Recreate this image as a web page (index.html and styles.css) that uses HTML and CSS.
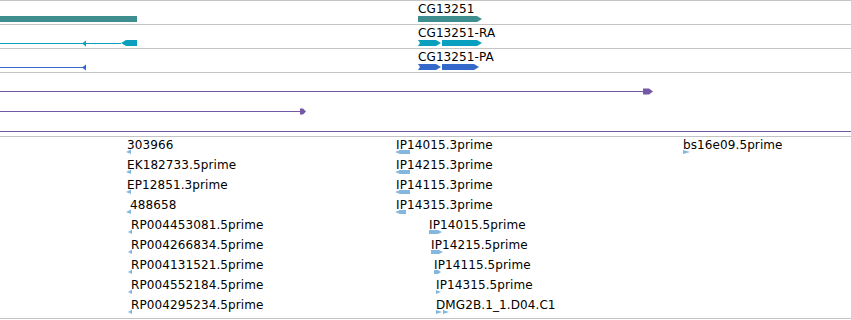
FILE: index.html
```html
<!DOCTYPE html>
<html lang="en">
<head>
    <meta charset="UTF-8">
    <title>Tracks</title>
    <link rel="stylesheet" href="styles.css">
</head>
<body>
    <div class="tracks">

        <!-- Gene -->
        <div class="track">
            <svg class="glyphs" width="851" height="23">
                <rect class="gene" x="0" y="15" width="137" height="6"/>
                <polygon class="gene" points="418,15 477,15 482,18 477,21 418,21"/>
            </svg>
            <span class="label" style="left:418px">CG13251</span>
        </div>

        <!-- Transcript -->
        <div class="track">
            <svg class="glyphs" width="851" height="23">
                <rect class="rna" x="0" y="18" width="121" height="1"/>
                <polygon class="rna" points="82,18.5 86,15.5 86,21.5"/>
                <polygon class="rna" points="121,18 126,15 137,15 137,21 126,21"/>
                <polygon class="rna" points="418,15 436,15 441,18 436,21 418,21 420,18"/>
                <polygon class="rna" points="442,15 477,15 482,18 477,21 442,21"/>
            </svg>
            <span class="label" style="left:418px">CG13251-RA</span>
        </div>

        <!-- Protein -->
        <div class="track">
            <svg class="glyphs" width="851" height="23">
                <rect class="prot" x="0" y="18" width="84" height="1"/>
                <polygon class="prot" points="82,18.5 86,15.5 86,21.5"/>
                <polygon class="prot" points="418,15 436,15 441,18 436,21 418,21 420,18"/>
                <polygon class="prot" points="442,15 474,15 479,18 474,21 442,21"/>
            </svg>
            <span class="label" style="left:418px">CG13251-PA</span>
        </div>

        <!-- Long features -->
        <div class="track track-long">
            <svg class="glyphs" width="851" height="63">
                <rect class="long" x="0" y="18" width="645" height="1"/>
                <polygon class="long" points="643,15.5 649,15.5 653,18.5 649,21.5 643,21.5"/>
                <rect class="long" x="0" y="38" width="302" height="1"/>
                <polygon class="long" points="300,35.5 303,35.5 306,38.5 303,41.5 300,41.5"/>
                <rect class="long" x="0" y="58" width="851" height="1"/>
            </svg>
        </div>

        <!-- Reads -->
        <div class="track track-reads">
            <svg class="glyphs" width="851" height="181">
                <g class="read">
                    <polygon points="126,15 131,12.5 131,17"/>
                    <polygon points="126,35 131,32.5 131,37"/>
                    <polygon points="126,55 131,52.5 131,57"/>
                    <polygon points="126,75 131,72.5 131,77"/>
                    <polygon points="128,95 132,92.5 132,97"/>
                    <polygon points="128,115 132,112.5 132,117"/>
                    <polygon points="128,135 132,132.5 132,137"/>
                    <polygon points="128,155 132,152.5 132,157"/>
                    <polygon points="128,175 132,172.5 132,177"/>

                    <polygon points="395,15 400,13 410,13 410,17 400,17"/>
                    <polygon points="395,35 400,33 410,33 410,37 400,37"/>
                    <polygon points="395,55 400,53 410,53 410,57 400,57"/>
                    <polygon points="395,75 400,73 406,73 406,77 400,77"/>
                    <polygon points="429,93 438,93 442,95 438,97 429,97"/>
                    <polygon points="431,113 439,113 443,115 439,117 431,117"/>
                    <polygon points="434,133 438,133 441,135 438,137 434,137"/>
                    <polygon points="436,153 441,155 436,157"/>
                    <polygon points="436,173 442,175 436,177"/>
                    <polygon points="443,173 449,175 443,177"/>

                    <polygon points="683,13 690,15 683,17"/>
                </g>
            </svg>
            <span class="label" style="left:127px;top:1px">303966</span>
            <span class="label" style="left:127px;top:21px">EK182733.5prime</span>
            <span class="label" style="left:127px;top:41px">EP12851.3prime</span>
            <span class="label" style="left:130px;top:61px">488658</span>
            <span class="label" style="left:131px;top:81px">RP004453081.5prime</span>
            <span class="label" style="left:131px;top:101px">RP004266834.5prime</span>
            <span class="label" style="left:131px;top:121px">RP004131521.5prime</span>
            <span class="label" style="left:131px;top:141px">RP004552184.5prime</span>
            <span class="label" style="left:131px;top:161px">RP004295234.5prime</span>

            <span class="label" style="left:396px;top:1px">IP14015.3prime</span>
            <span class="label" style="left:396px;top:21px">IP14215.3prime</span>
            <span class="label" style="left:396px;top:41px">IP14115.3prime</span>
            <span class="label" style="left:396px;top:61px">IP14315.3prime</span>
            <span class="label" style="left:429px;top:81px">IP14015.5prime</span>
            <span class="label" style="left:431px;top:101px">IP14215.5prime</span>
            <span class="label" style="left:434px;top:121px">IP14115.5prime</span>
            <span class="label" style="left:436px;top:141px">IP14315.5prime</span>
            <span class="label" style="left:436px;top:161px">DMG2B.1_1.D04.C1</span>

            <span class="label" style="left:683px;top:1px">bs16e09.5prime</span>
        </div>

    </div>
</body>
</html>
```

FILE: styles.css
```css
* {
    margin: 0;
    padding: 0;
    box-sizing: content-box;
}

body {
    background: #fff;
    font-family: 'DejaVu Sans', sans-serif;
    font-size: 12px;
    line-height: 14px;
    letter-spacing: 0.1px;
    color: #000;
    overflow: hidden;
}

.tracks {
    width: 851px;
    border-top: 1px solid #c4c4c4;
}

.track {
    position: relative;
    height: 23px;
    border-bottom: 1px solid #c4c4c4;
}

.track-long {
    height: 63px;
}

.track-reads {
    height: 181px;
}

.glyphs {
    position: absolute;
    top: 0;
    left: 0;
    display: block;
}

.label {
    position: absolute;
    top: 1px;
    white-space: nowrap;
}

.gene { fill: #3f8e8f; }
.rna { fill: #0b9fbf; }
.prot { fill: #3469cb; }
.long { fill: #7358a6; }
.read { fill: #84b7de; }
```
